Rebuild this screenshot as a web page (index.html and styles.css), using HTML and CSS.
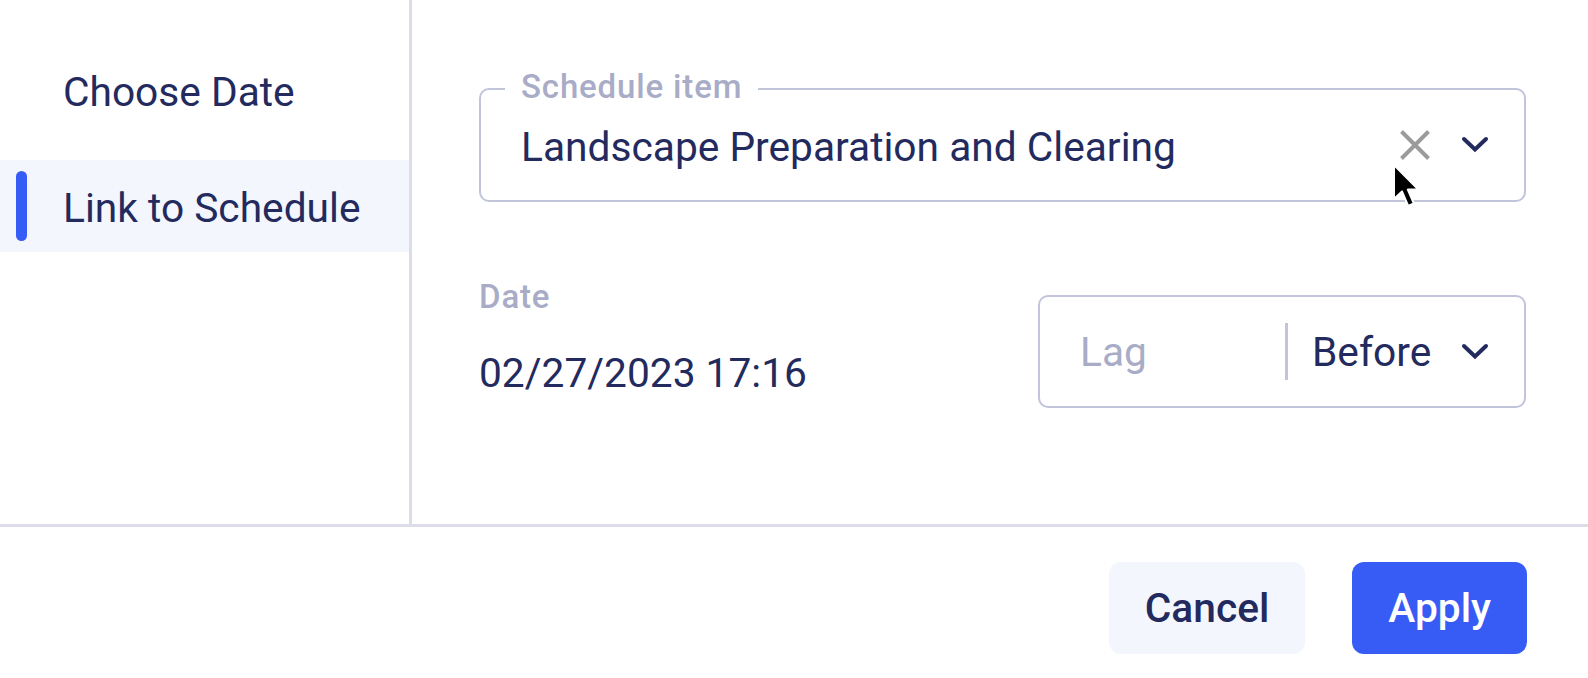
FILE: index.html
```html
<!DOCTYPE html>
<html lang="en">
<head>
<meta charset="utf-8">
<title>Link to Schedule</title>
<link rel="stylesheet" href="styles.css">
</head>
<body>
<div class="dialog">
  <div class="content">
    <nav class="sidebar">
      <div class="nav-item">Choose Date</div>
      <div class="nav-item active"><span class="indicator"></span>Link to Schedule</div>
    </nav>
    <main class="main">
      <div class="field">
        <span class="field-label">Schedule item</span>
        <span class="field-value">Landscape Preparation and Clearing</span>
        <span class="icon clear">
          <svg width="32" height="32" viewBox="0 0 32 32"><path d="M2.5 2.5 L29.5 29.5 M29.5 2.5 L2.5 29.5" stroke="#9b9b9b" stroke-width="4" fill="none"/></svg>
        </span>
        <span class="icon chevron">
          <svg width="32" height="32" viewBox="0 0 32 32"><path d="M5 10 L16 20.5 L27 10" stroke="#232a5e" stroke-width="4" fill="none" stroke-linecap="round"/></svg>
        </span>
        <svg class="cursor" width="30" height="50" viewBox="0 0 15 25"><path d="M1 1 L1 18 L5 14.2 L8.1 21.4 L10.9 20.2 L7.9 13.3 L13.2 13.3 Z" fill="#000" stroke="#fff" stroke-width="1" stroke-linejoin="round"/></svg>
      </div>
      <div class="date-row">
        <div class="date-col">
          <div class="date-label">Date</div>
          <div class="date-value">02/27/2023 17:16</div>
        </div>
        <div class="lag-box">
          <span class="lag-input">Lag</span>
          <span class="sep"></span>
          <span class="unit">Before
            <svg width="32" height="32" viewBox="0 0 32 32"><path d="M5 10 L16 20.5 L27 10" stroke="#232a5e" stroke-width="4" fill="none" stroke-linecap="round"/></svg>
          </span>
        </div>
      </div>
    </main>
  </div>
  <footer class="footer">
    <button class="btn btn-secondary">Cancel</button>
    <button class="btn btn-primary">Apply</button>
  </footer>
</div>
</body>
</html>
```

FILE: styles.css
```css
html, body {
  margin: 0;
  padding: 0;
  background: #ffffff;
}

body {
  font-family: Roboto, "Noto Sans", Arial, sans-serif;
  color: #232a5e;
}

.dialog {
  width: 1588px;
  height: 678px;
  display: flex;
  flex-direction: column;
}

.content {
  display: flex;
  height: 527px;
  box-sizing: border-box;
  border-bottom: 3px solid #dcdde9;
}

.sidebar {
  width: 412px;
  box-sizing: border-box;
  border-right: 3px solid #dcdde9;
  padding-top: 44px;
  display: flex;
  flex-direction: column;
  gap: 24px;
}

.nav-item {
  position: relative;
  height: 92px;
  box-sizing: border-box;
  display: flex;
  align-items: center;
  padding: 4px 0 0 63px;
  font-size: 40.7px;
  line-height: 48px;
}

.nav-item.active {
  background: #f3f6fd;
}

.indicator {
  position: absolute;
  left: 16px;
  top: 11px;
  width: 11px;
  height: 70px;
  border-radius: 6px;
  background: #365cf6;
}

.main {
  flex: 1;
  padding: 88px 62px 0 67px;
}

.field {
  position: relative;
  height: 114px;
  box-sizing: border-box;
  border: 2px solid #c1c4db;
  border-radius: 10px;
  display: flex;
  align-items: center;
  padding: 0 33px 0 40px;
}

.field-label {
  position: absolute;
  left: 24px;
  top: -19px;
  padding: 0 16px;
  background: #ffffff;
  font-size: 33px;
  line-height: 32px;
  font-weight: 500;
  letter-spacing: 0.85px;
  color: #a9acc7;
}

.field-value {
  flex: 1;
  padding-top: 4px;
  font-size: 40.7px;
  line-height: 48px;
}

.icon {
  display: flex;
}

.clear {
  margin-right: 28px;
}

.cursor {
  position: absolute;
  left: 911px;
  top: 73px;
}

.date-row {
  display: flex;
  align-items: flex-start;
  margin-top: 79px;
}

.date-col {
  flex: 1;
}

.date-label {
  font-size: 33px;
  line-height: 32px;
  font-weight: 500;
  letter-spacing: 0.85px;
  color: #a9acc7;
}

.date-value {
  margin-top: 36px;
  font-size: 40.7px;
  line-height: 48px;
}

.lag-box {
  margin-top: 14px;
  width: 488px;
  height: 113px;
  box-sizing: border-box;
  border: 2px solid #c1c4db;
  border-radius: 10px;
  display: flex;
  align-items: center;
}

.lag-input {
  width: 245px;
  box-sizing: border-box;
  padding-left: 40px;
  font-size: 40.7px;
  line-height: 48px;
  color: #a9acc7;
}

.sep {
  width: 3px;
  height: 57px;
  background: #c1c4db;
}

.unit {
  flex: 1;
  display: flex;
  align-items: center;
  justify-content: space-between;
  padding: 0 33px 0 24px;
  font-size: 40.7px;
  line-height: 48px;
}

.unit svg {
  display: block;
}

.footer {
  flex: 1;
  display: flex;
  justify-content: flex-end;
  align-items: flex-start;
  gap: 47px;
  padding: 35px 61px 0 0;
}

.btn {
  height: 92px;
  padding: 0 36px;
  border: none;
  border-radius: 12px;
  font-family: Roboto, "Noto Sans", Arial, sans-serif;
  font-size: 40.7px;
  font-weight: 500;
  cursor: pointer;
}

.btn-secondary {
  background: #f3f6fd;
  color: #232a5e;
}

.btn-primary {
  background: #375cf6;
  color: #ffffff;
}
```
